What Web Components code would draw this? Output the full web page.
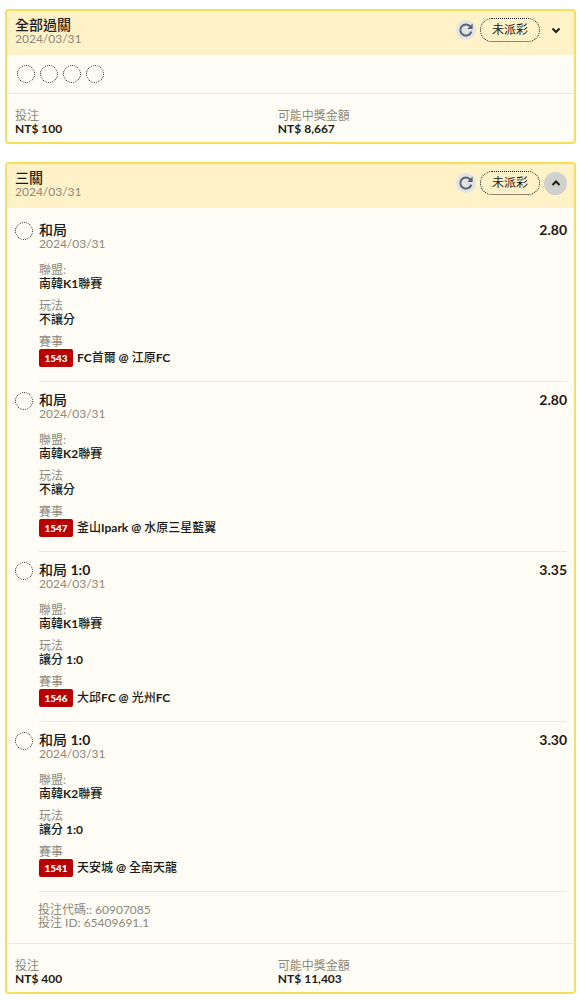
<!DOCTYPE html>
<html lang="zh-Hant">
<head>
<meta charset="utf-8">
<meta name="viewport" content="width=device-width, initial-scale=1">
<title>投注紀錄</title>
<style>
  body {
    margin: 9px 6px 6px 5px;
    background: #fff;
    color: #1c1b17;
    font-family: Lato, "Noto Sans CJK TC", sans-serif;
    font-size: 12px;
  }
  main { display: grid; gap: 18px; }
</style>
</head>
<body>
<main>
  <bet-card name="全部過關" date="2024/03/31" stake="NT$ 100" payout="NT$ 8,667">
    <leg-dots count="4"></leg-dots>
  </bet-card>

  <bet-card name="三關" date="2024/03/31" stake="NT$ 400" payout="NT$ 11,403" open>
    <bet-legs>
      <bet-leg pick="和局" date="2024/03/31" odds="2.80" league="南韓K1聯賽" market="不讓分" code="1543" match="FC首爾 @ 江原FC"></bet-leg>
      <bet-leg pick="和局" date="2024/03/31" odds="2.80" league="南韓K2聯賽" market="不讓分" code="1547" match="釜山Ipark @ 水原三星藍翼"></bet-leg>
      <bet-leg pick="和局 1:0" date="2024/03/31" odds="3.35" league="南韓K1聯賽" market="讓分 1:0" code="1546" match="大邱FC @ 光州FC"></bet-leg>
      <bet-leg pick="和局 1:0" date="2024/03/31" odds="3.30" league="南韓K2聯賽" market="讓分 1:0" code="1541" match="天安城 @ 全南天龍"></bet-leg>
      <div slot="ids">投注代碼:: 60907085</div>
      <div slot="ids">投注 ID: 65409691.1</div>
    </bet-legs>
  </bet-card>
</main>

<script>
// Latin runs are set bolder than the Chinese text around them
const mark = (text) => text.replace(/ ?[A-Za-z0-9:@]+ ?/g, "<b>$&</b>");

class BetCard extends HTMLElement {
  constructor() {
    super();
    this.attachShadow({ mode: "open" });
  }

  connectedCallback() {
    const open = this.hasAttribute("open");
    this.shadowRoot.innerHTML = `
      <style>
        :host {
          display: block;
          border: 2px solid #f9df58;
          border-radius: 4px;
          background: #fffdf5;
          overflow: hidden;
        }
        header {
          display: flex;
          justify-content: space-between;
          align-items: flex-start;
          padding: 6px 7px 10px 8px;
          background: #fff2c9;
        }
        h2 { margin: 0; font-size: 14px; line-height: 16px; font-weight: 500; }
        time { display: block; line-height: 12px; color: #8b887c; }
        .actions { display: flex; align-items: center; gap: 4px; height: 26px; }
        button {
          display: grid;
          place-items: center;
          padding: 0;
          border: 0;
          border-radius: 50%;
          color: inherit;
          background: none;
        }
        .refresh { width: 20px; height: 20px; background: #e3e4e2; color: #59647a; }
        .toggle { width: 23px; height: 23px; }
        :host([open]) .toggle { background: #d0d1cf; }
        .status {
          box-sizing: border-box;
          height: 24px;
          padding: 0 11px;
          border: 1px dotted #1c1b17;
          border-radius: 12px;
          line-height: 22px;
        }
        dl {
          display: grid;
          grid-template-columns: 10fr 11fr;
          margin: 0;
          padding: 15px 7px 7px 8px;
          border-top: 1px solid #ebe9e4;
          line-height: 13px;
        }
        dt { color: #8b887c; }
        dd { margin: 0; font-weight: 700; }
      </style>
      <header>
        <div>
          <h2>${this.getAttribute("name")}</h2>
          <time>${this.getAttribute("date")}</time>
        </div>
        <div class="actions">
          <button class="refresh" aria-label="重新整理">
            <svg width="16" height="16" viewBox="0 0 16 16" fill="none" stroke="currentColor" stroke-width="2">
              <path d="M13.3 9.6A5.6 5.6 0 1 1 12.4 4.6"/>
              <path d="M14.6 1.6v5.3H9.3z" fill="currentColor" stroke="none"/>
            </svg>
          </button>
          <span class="status">未派彩</span>
          <button class="toggle" aria-expanded="${open}" aria-label="詳情">
            <svg width="10" height="8" viewBox="0 0 10 8" fill="none" stroke="currentColor" stroke-width="2">
              <path d="${open ? "M1.5 6 5 2.5 8.5 6" : "M1.5 2.5 5 6 8.5 2.5"}"/>
            </svg>
          </button>
        </div>
      </header>
      <slot></slot>
      <dl>
        <div><dt>投注</dt><dd>${this.getAttribute("stake")}</dd></div>
        <div><dt>可能中獎金額</dt><dd>${this.getAttribute("payout")}</dd></div>
      </dl>
    `;
  }
}

class LegDots extends HTMLElement {
  constructor() {
    super();
    this.attachShadow({ mode: "open" });
  }

  connectedCallback() {
    this.shadowRoot.innerHTML = `
      <style>
        :host { display: flex; gap: 5px; padding: 10px; }
        i { box-sizing: border-box; width: 18px; height: 18px; border: 1px dotted #1c1b17; border-radius: 50%; }
      </style>
      ${"<i></i>".repeat(Number(this.getAttribute("count")))}
    `;
  }
}

class BetLegs extends HTMLElement {
  constructor() {
    super();
    this.attachShadow({ mode: "open" });
    this.shadowRoot.innerHTML = `
      <style>
        :host { display: block; padding: 4px 7px 14px 8px; }
        .ids { padding: 11px 0 0 23px; line-height: 13px; color: #8b887c; }
      </style>
      <slot></slot>
      <div class="ids"><slot name="ids"></slot></div>
    `;
  }
}

class BetLeg extends HTMLElement {
  constructor() {
    super();
    this.attachShadow({ mode: "open" });
  }

  connectedCallback() {
    this.shadowRoot.innerHTML = `
      <style>
        :host { display: flex; align-items: flex-start; gap: 6px; }
        .dot {
          flex: none;
          box-sizing: border-box;
          width: 18px;
          height: 18px;
          margin-top: 10px;
          border: 1px dotted #1c1b17;
          border-radius: 50%;
        }
        .body { flex: 1; padding: 10px 0 13px; border-bottom: 1px solid #ebe9e4; }
        .top { display: flex; justify-content: space-between; font-size: 14px; line-height: 16px; }
        h3 { margin: 0; font-size: 14px; font-weight: 500; }
        b { font-weight: 700; }
        time { display: block; line-height: 12px; color: #8b887c; }
        dl { display: grid; gap: 8px; margin: 14px 0 0; }
        dt { line-height: 12px; color: #8b887c; }
        dd { margin: 0; line-height: 16px; font-weight: 500; }
        .match { display: flex; align-items: center; gap: 4px; line-height: 20px; }
        .match span { white-space: pre-wrap; }
        .code {
          width: 34px;
          border-radius: 2px;
          background: #b90000;
          color: #fff;
          font-size: 10px;
          font-weight: 900;
          line-height: 18px;
          text-align: center;
        }
      </style>
      <span class="dot"></span>
      <div class="body">
        <div class="top">
          <h3>${mark(this.getAttribute("pick"))}</h3>
          <strong>${this.getAttribute("odds")}</strong>
        </div>
        <time>${this.getAttribute("date")}</time>
        <dl>
          <div><dt>聯盟:</dt><dd>${mark(this.getAttribute("league"))}</dd></div>
          <div><dt>玩法</dt><dd>${mark(this.getAttribute("market"))}</dd></div>
          <div>
            <dt>賽事</dt>
            <dd class="match"><span class="code">${this.getAttribute("code")}</span><span>${mark(this.getAttribute("match"))}</span></dd>
          </div>
        </dl>
      </div>
    `;
  }
}

customElements.define("bet-card", BetCard);
customElements.define("leg-dots", LegDots);
customElements.define("bet-legs", BetLegs);
customElements.define("bet-leg", BetLeg);
</script>
</body>
</html>
